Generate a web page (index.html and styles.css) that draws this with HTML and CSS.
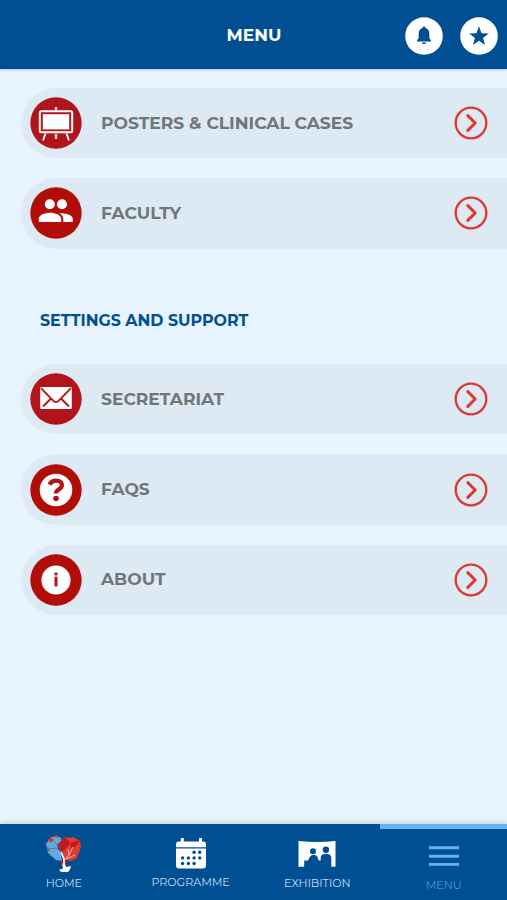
FILE: index.html
```html
<!DOCTYPE html>
<html lang="en">
<head>
<meta charset="utf-8">
<title>Menu</title>
<link rel="stylesheet" href="styles.css">
</head>
<body>
<svg class="defs" width="0" height="0" aria-hidden="true">
  <symbol id="chevron" viewBox="0 0 34 34"><circle cx="17" cy="17" r="15.3" fill="none" stroke="#db382f" stroke-width="2.3"/><path d="M13.800 9.600 21.200 17l-7.400 7.400" fill="none" stroke="#db382f" stroke-width="3" stroke-linecap="round" stroke-linejoin="round"/></symbol>
</svg>
<header class="header">
  <h1 class="title">MENU</h1>
  <div class="actions">
    <svg class="action" viewBox="0 0 38 38"><circle cx="19" cy="19" r="18.8" fill="#fff"/><path d="M19 9.4c1 0 1.5.6 1.5 1.5 2.500.7 3.800 2.900 3.800 5.600v4.600l1.700 2.300v1H12v-1l1.700-2.300v-4.600c0-2.700 1.300-4.900 3.800-5.600 0-.9.5-1.500 1.500-1.500zM17 25.500h4c0 1-.8 1.600-2 1.600s-2-.6-2-1.600z" fill="#004f93"/></svg>
    <svg class="action" viewBox="0 0 38 38"><circle cx="19" cy="19" r="18.800" fill="#fff"/><path d="m19 9.300 2.500 6.900 7.300.2-5.800 4.500 2.100 7-6.100-4.100-6.100 4.100 2.100-7-5.800-4.500 7.300-.2z" fill="#004f93"/></svg>
  </div>
</header>
<main class="content">
  <nav class="list">
    <a class="row">
      <svg class="badge" viewBox="0 0 52 52"><circle cx="26" cy="26" r="25.700" fill="#b2141c"/><path d="M15.500 36.500l-2.500 7M36.500 36.500l2.500 7" stroke="#fff" stroke-width="1.800"/><path d="M26 10v3M26 37v5" stroke="#fbd9c8" stroke-width="2.400"/><rect x="9.800" y="14.300" width="32.400" height="21" rx="1.500" fill="#b2141c" stroke="#fff" stroke-width="2"/><rect x="12.800" y="17.200" width="26.400" height="15.200" fill="#fff"/></svg>
      <span class="label">POSTERS &amp; CLINICAL CASES</span>
      <svg class="chevron"><use href="#chevron"/></svg>
    </a>
    <a class="row">
      <svg class="badge" viewBox="0 0 52 52"><circle cx="26" cy="26" r="25.700" fill="#b30d08"/><g fill="#fff"><circle cx="19.800" cy="17.300" r="5"/><circle cx="32" cy="17.300" r="5"/><path d="M8.800 35v-3c0-4 6-6.200 11.200-6.200s11.200 2.200 11.200 6.200v3zM33.300 35v-3.200c0-2.500-1.500-4.200-3.800-5.400 6-.4 13.300 1.700 13.300 5.600v3z"/></g></svg>
      <span class="label">FACULTY</span>
      <svg class="chevron"><use href="#chevron"/></svg>
    </a>
  </nav>
  <h2 class="section">SETTINGS AND SUPPORT</h2>
  <nav class="list">
    <a class="row">
      <svg class="badge" viewBox="0 0 52 52"><circle cx="26" cy="26" r="25.700" fill="#b2141c"/><rect x="10.200" y="14" width="31.600" height="22" rx="1.200" fill="#fff"/><path d="m11 15.200 12.400 12.600c1.500 1.500 3.700 1.500 5.200 0l12.400-12.600M13 33.500l8-8M39 33.500l-8-8" fill="none" stroke="#b2141c" stroke-width="1.900"/></svg>
      <span class="label">SECRETARIAT</span>
      <svg class="chevron"><use href="#chevron"/></svg>
    </a>
    <a class="row">
      <svg class="badge" viewBox="0 0 52 52"><circle cx="26" cy="26" r="25.700" fill="#b30d08"/><circle cx="26" cy="26" r="16.300" fill="#fff"/><path d="M19.600 20.600c1.200-2.800 3.400-4 6.400-4 3.600 0 5.900 1.700 5.900 4.600 0 4.200-6 4-6 8.400" fill="none" stroke="#b2141c" stroke-width="4.400"/><circle cx="26" cy="34.500" r="2.800" fill="#b2141c"/></svg>
      <span class="label">FAQS</span>
      <svg class="chevron"><use href="#chevron"/></svg>
    </a>
    <a class="row">
      <svg class="badge" viewBox="0 0 52 52"><circle cx="26" cy="26" r="25.700" fill="#b30d08"/><circle cx="26" cy="26" r="14.600" fill="#fff"/><path d="M24.500 22.600h3v9.800h-3z" fill="#b2141c"/><circle cx="26" cy="19.900" r="1.700" fill="#b2141c"/></svg>
      <span class="label">ABOUT</span>
      <svg class="chevron"><use href="#chevron"/></svg>
    </a>
  </nav>
</main>
<footer class="tabs">
  <a class="tab home">
    <svg class="tab-icon" viewBox="0 0 40 40"><path d="m2 11 5-7 9 0 3 6-3 6 2 12-6-1-8-7z" fill="#62a9de"/><path d="m4 7 3-3 3 2-3 4zM8 3l6-1 0 3zM2 14l2 0 2 5-2-1z" fill="#d8392f"/><path d="m13 12 8-8 4 1 4-1 7 4 1 6-4 11-6 3-7-1-2-9z" fill="#e33a2f"/><path d="m13 12 8-8 5 6-6 8-6-1zM26 10l11-3-9 10zM16 28l7-1-1 5-3 1z" fill="#b91c1e"/><path d="m8 6 8 9-13 1" fill="none" stroke="#3377b4" stroke-width=".8"/><path d="M20 36V26l-3-7" fill="none" stroke="#e9f1f8" stroke-width="1.800"/><path d="m20 28 5-6-1-6M25 22l4-8M22 26l9-4" fill="none" stroke="#f0b9b4" stroke-width="1"/><path d="m18 30 2 3 1-2 1 3 5-1-1 3.500-2 2.500h-7l-2-2.600 4-.6z" fill="#fff"/></svg>
    <span class="tab-label">HOME</span>
  </a>
  <a class="tab programme">
    <svg class="tab-icon" viewBox="0 0 40 40"><g fill="#fff"><path d="M8 8.500h24c2 0 3 1 3 3v2.800H5v-2.800c0-2 1-3 3-3zM9.800 5h3v5h-3zM28 5h3v5h-3z"/><path d="M5 15.500h30v17c0 2-1 3-3 3H8c-2 0-3-1-3-3z"/></g><g fill="#004f93"><circle cx="23.100" cy="19.300" r="1.700"/><circle cx="28.700" cy="19.300" r="1.700"/><circle cx="11.600" cy="24.900" r="1.700"/><circle cx="17.400" cy="24.900" r="1.700"/><circle cx="23.100" cy="24.900" r="1.700"/><circle cx="28.700" cy="24.900" r="1.700"/><circle cx="11.600" cy="30.500" r="1.700"/><circle cx="17.400" cy="30.500" r="1.700"/><circle cx="23.100" cy="30.500" r="1.700"/></g></svg>
    <span class="tab-label">PROGRAMME</span>
  </a>
  <a class="tab exhibition">
    <svg class="tab-icon" viewBox="0 0 40 40"><path d="M1.500 8q18.500 2 37 0v25.800h-4.200v-9.300q-.5-3.300-4-3.500h-2.800q-3.500.3-3.800 3.500v3h-2l-1.200-3.500q-1-1.800-3-2h-1.600q-2.300.2-3.200 2l-1.600 3.500H7.200v6.300H1.500z" fill="#fff"/><circle cx="16" cy="18.300" r="3" fill="#004f93"/><circle cx="28.900" cy="16.700" r="3.200" fill="#004f93"/></svg>
    <span class="tab-label">EXHIBITION</span>
  </a>
  <a class="tab menu">
    <svg class="tab-icon" viewBox="0 0 40 40"><path d="M5 12.800h30M5 21.200h30M5 29.400h30" stroke="#61b3f0" stroke-width="2.900"/></svg>
    <span class="tab-label">MENU</span>
  </a>
</footer>
</body>
</html>
```
FILE: styles.css
```css
* { box-sizing: border-box; }

body {
  margin: 0;
  height: 900px;
  display: flex;
  flex-direction: column;
  overflow: hidden;
  background: #e7f4fe;
  font-family: Montserrat, Inter, sans-serif;
}

.defs { position: absolute; }

.header {
  display: grid;
  grid-template-columns: 1fr auto 1fr;
  align-items: center;
  height: 69px;
  padding: 2px 9px 0 10px;
  background: #004f93;
  box-shadow: 0 1px 2px #a9c8e1;
}

.title {
  grid-column: 2;
  margin: 0 0 2px;
  color: #fff;
  font-size: 17px;
  line-height: 20px;
  font-weight: 700;
}

.actions { display: flex; justify-content: flex-end; gap: 17px; }
.action { width: 38px; height: 38px; }

.content { flex: 1; padding: 19px 0 0 21px; }
.list { display: flex; flex-direction: column; gap: 20px; }

.row {
  display: flex;
  align-items: center;
  height: 70.3px;
  padding: 0 19px 0 9px;
  border-radius: 35px 0 0 35px;
  background: #deeaf3;
}

.badge { width: 52px; height: 52px; }

.label {
  flex: 1;
  margin: 0 0 1px 19px;
  color: #70777b;
  font-size: 17.13px;
  line-height: 20px;
  font-weight: 700;
  white-space: nowrap;
}

.chevron { width: 34px; height: 34px; }

.section {
  margin: 62px 0 33.6px 19px;
  color: #004f93;
  font-size: 15.87px;
  line-height: 20px;
  font-weight: 700;
}

.tabs {
  display: grid;
  grid-template-columns: repeat(4, 1fr);
  height: 76px;
  background: #004f93;
  box-shadow: 0 -1px 5px #b8c9d6;
}

.tab {
  display: flex;
  flex-direction: column;
  align-items: center;
  padding: 9px 0 0 1px;
  color: #c9dcef;
}

.tab-icon { width: 40px; height: 40px; }

.tab-label {
  margin-top: 3px;
  font-size: 11.1px;
  line-height: 14px;
}

.programme .tab-label { margin-top: 2px; }

.menu {
  padding: 6px 0 0;
  border-top: 5px solid #5fb4f1;
  color: #4b93d2;
}
```
